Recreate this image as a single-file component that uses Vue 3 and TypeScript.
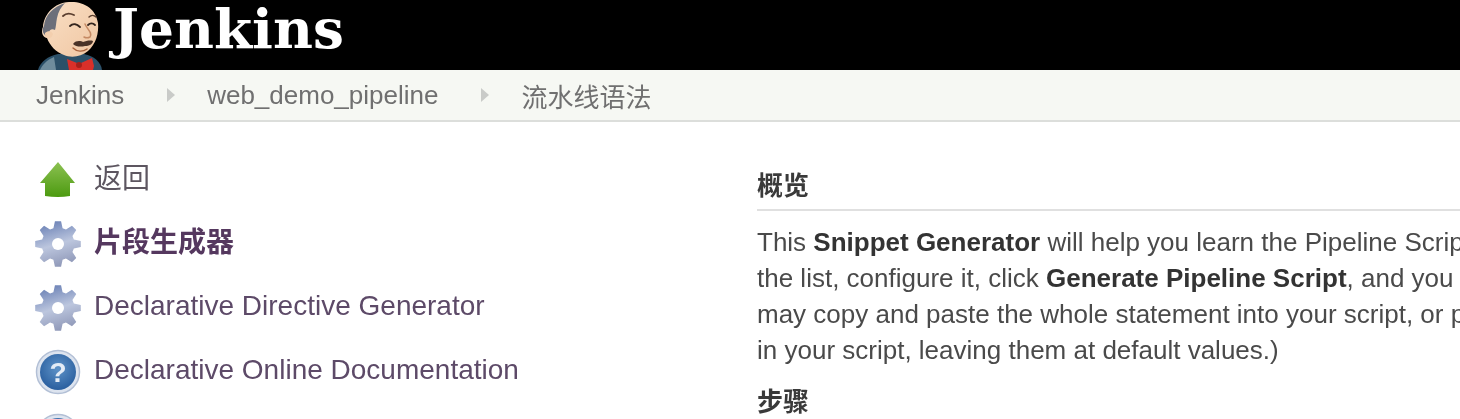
<script setup lang="ts">
const crumbs = ['Jenkins', 'web_demo_pipeline', '流水线语法']

function buildGear(): string {
  const cx = 24
  const cy = 24
  const pts: string[] = []
  for (let i = 0; i < 8; i++) {
    const a = (i * Math.PI) / 4 - Math.PI / 2
    const step = Math.PI / 4
    const ring: Array<[number, number]> = [
      [16.5, a - step * 0.36],
      [23, a - step * 0.17],
      [23, a + step * 0.17],
      [16.5, a + step * 0.36],
    ]
    for (const [r, t] of ring) {
      pts.push(`${(cx + r * Math.cos(t)).toFixed(2)} ${(cy + r * Math.sin(t)).toFixed(2)}`)
    }
  }
  return 'M' + pts.join(' L') + ' Z'
}
const gearPath = buildGear()
</script>

<template>
  <div class="page">
    <header class="top">
      <svg class="logo" width="72" height="70" viewBox="0 0 72 70">
        <defs>
          <linearGradient id="face" x1="0" y1="0" x2="1" y2="1">
            <stop offset="0" stop-color="#f9e0c6" />
            <stop offset="1" stop-color="#f0c6a2" />
          </linearGradient>
        </defs>
        <path d="M2 70 C4 62 12 56 22 54 L48 54 C58 56 65 62 66 70 Z" fill="#2c5068" />
        <path d="M4 70 C6 65 11 60 18 57 L20 70 Z" fill="#6f8c9c" />
        <path d="M11 38 C6 37 5 31 7 27 C8 14 18 3 33 2 C48 1 60 9 62 23 C63 33 60 44 52 51 C45 57 35 58 28 55 C20 52 14 46 11 38 Z" fill="url(#face)" />
        <path d="M10 36 C6 33 6 29 8 26 C9 15 17 7 29 3 C25 7 22 12 21 18 C20 23 20 27 19 30 C16 28 13 30 13 33 C12 34 11 35 10 36 Z" fill="#6c6f7a" />
        <path d="M9 33 C12 30 16 31 17 34 C16 38 13 39 11 38 C9 37 9 35 9 33 Z" fill="#f3cfae" />
        <path d="M27 16 C30 13 34 13 38 15" stroke="#5a3e2e" stroke-width="1.8" fill="none" stroke-linecap="round" />
        <path d="M53 17 C55 15 58 15 60 17" stroke="#5a3e2e" stroke-width="1.4" fill="none" stroke-linecap="round" />
        <path d="M34 26 C37 23 41 24 44 27" stroke="#33251e" stroke-width="1.8" fill="none" stroke-linecap="round" />
        <path d="M52 25 C54 23 57 23 59 25" stroke="#33251e" stroke-width="1.8" fill="none" stroke-linecap="round" />
        <path d="M49 24 C51 29 57 33 54 37 C52 38 50 38 48 37" stroke="#c58a64" stroke-width="1.5" fill="none" stroke-linecap="round" />
        <path d="M37 44 C40 40 45 41 47 42 C50 41 54 40 57 41 C57 44 53 46 49 46 C45 47 40 47 37 44 Z" fill="#4a3226" />
        <path d="M37 48 C41 52 47 52 51 49" stroke="#a8643f" stroke-width="1.4" fill="none" stroke-linecap="round" />
        <path d="M31 59 L41 63 L45 63 L56 58 L58 66 L57 70 L33 70 Z" fill="#d9302a" />
        <circle cx="43" cy="65" r="3" fill="#a61f1a" />
      </svg>
      <span class="brand">Jenkins</span>
    </header>

    <nav class="crumbs">
      <template v-for="(c, i) in crumbs" :key="c">
        <span class="crumb">{{ c }}</span>
        <span v-if="i < crumbs.length - 1" class="sep"></span>
      </template>
    </nav>

    <div class="body">
      <aside class="side">
        <div class="item">
          <svg class="icon" width="48" height="48" viewBox="0 0 48 48">
            <defs>
              <linearGradient id="arrow" x1="0" y1="0" x2="0" y2="1">
                <stop offset="0" stop-color="#8cc152" />
                <stop offset="1" stop-color="#4c9a10" />
              </linearGradient>
              <linearGradient id="gear" x1="0.35" y1="0" x2="0.65" y2="1">
                <stop offset="0" stop-color="#6c82b6" />
                <stop offset="0.5" stop-color="#bcc6de" />
                <stop offset="1" stop-color="#8d96b6" />
              </linearGradient>
              <radialGradient id="help" cx="0.5" cy="0.4" r="0.6">
                <stop offset="0" stop-color="#5f93c8" />
                <stop offset="1" stop-color="#2a5f9f" />
              </radialGradient>
            </defs>
            <path d="M24 6 L41 27 L36 27 L36 40 Q24 42 11 40 L11 27 L6 27 Z" fill="url(#arrow)" />
          </svg>
          <span class="label plain">返回</span>
        </div>
        <div class="item">
          <svg class="icon" width="48" height="48" viewBox="0 0 48 48">
            <path :d="gearPath" fill="url(#gear)" />
            <circle cx="24" cy="24" r="6" fill="#fff" />
          </svg>
          <span class="label bold">片段生成器</span>
        </div>
        <div class="item">
          <svg class="icon" width="48" height="48" viewBox="0 0 48 48">
            <path :d="gearPath" fill="url(#gear)" />
            <circle cx="24" cy="24" r="6" fill="#fff" />
          </svg>
          <span class="label">Declarative Directive Generator</span>
        </div>
        <div class="item">
          <svg class="icon" width="48" height="48" viewBox="0 0 48 48">
            <circle cx="24" cy="24" r="21.500" fill="#dde4ef" stroke="#b3c0d6" stroke-width="1.500" />
            <circle cx="24" cy="24" r="18" fill="url(#help)" />
            <text x="24" y="34" class="q">?</text>
          </svg>
          <span class="label">Declarative Online Documentation</span>
        </div>
        <div class="item">
          <svg class="icon" width="48" height="48" viewBox="0 0 48 48">
            <circle cx="24" cy="24" r="21.500" fill="#dde4ef" stroke="#b3c0d6" stroke-width="1.500" />
            <circle cx="24" cy="24" r="18" fill="url(#help)" />
            <text x="24" y="34" class="q">?</text>
          </svg>
          <span class="label">Steps Reference</span>
        </div>
      </aside>

      <main class="main">
        <h2 class="head ruled">概览</h2>
        <p class="text">
          <span class="line">This <b>Snippet Generator</b> will help you learn the Pipeline Script code which can be used to define various steps.</span>
          <span class="line">the list, configure it, click <b>Generate Pipeline Script</b>, and you will see a Pipeline Script statement that would call the step.</span>
          <span class="line">may copy and paste the whole statement into your script, or pick up just the options you care about.</span>
          <span class="line">in your script, leaving them at default values.)</span>
        </p>
        <h2 class="head">步骤</h2>
      </main>
    </div>
  </div>
</template>

<style>
html, body { margin: 0; background: #fff; overflow: hidden; }
</style>

<style scoped>
.page {
  width: 1460px;
  height: 419px;
  overflow: hidden;
  font-family: "Liberation Sans", "Noto Sans CJK SC", sans-serif;
  color: #444;
  filter: blur(0.4px);
}
.top {
  height: 70px;
  background: #000;
  display: flex;
  align-items: flex-start;
  padding-left: 36px;
  box-sizing: border-box;
}
.logo { flex: none; }
.brand {
  font-family: "DejaVu Serif", serif;
  font-weight: 700;
  font-size: 55px;
  line-height: 58px;
  color: #fff;
  margin-left: 5px;
}
.crumbs {
  height: 52px;
  box-sizing: border-box;
  background: #f6f8f3;
  border-bottom: 2px solid #dcdedb;
  display: flex;
  align-items: center;
  padding-left: 36px;
  font-size: 26px;
  color: #707070;
}
.crumb { white-space: nowrap; }
.sep {
  width: 0;
  height: 0;
  border-left: 8px solid #c9cbc8;
  border-top: 7px solid transparent;
  border-bottom: 7px solid transparent;
  margin: 0 32px 0 43px;
}
.body {
  display: flex;
  align-items: flex-start;
}
.side {
  width: 757px;
  flex: none;
  padding: 26px 0 0 34px;
  box-sizing: border-box;
}
.item {
  display: flex;
  align-items: center;
  height: 64px;
  gap: 12px;
}
.icon { flex: none; }
.label {
  font-size: 28px;
  line-height: 36px;
  color: #5d4a68;
  white-space: nowrap;
  margin-bottom: 4px;
}
.label.plain { color: #5d5660; font-weight: 400; margin-bottom: 3px; }
.label.bold { font-weight: 700; color: #55385f; margin-bottom: 3px; }
.q {
  font-family: "Liberation Sans", sans-serif;
  font-weight: 700;
  font-size: 28px;
  fill: #e4ecf6;
  text-anchor: middle;
}
.main {
  width: 703px;
  flex: none;
  padding-top: 46px;
  overflow: hidden;
}
.head {
  margin: 0;
  font-size: 26px;
  line-height: 36px;
  font-weight: 700;
  color: #3a3a3a;
}
.ruled {
  border-bottom: 2px solid #e0e0e0;
  padding-bottom: 5px;
  margin-bottom: 13px;
}
.text {
  margin: 0 0 16px;
  font-size: 26px;
  line-height: 36px;
  color: #4a4a4a;
}
.text b { color: #333; }
.line {
  display: block;
  white-space: nowrap;
}
</style>
